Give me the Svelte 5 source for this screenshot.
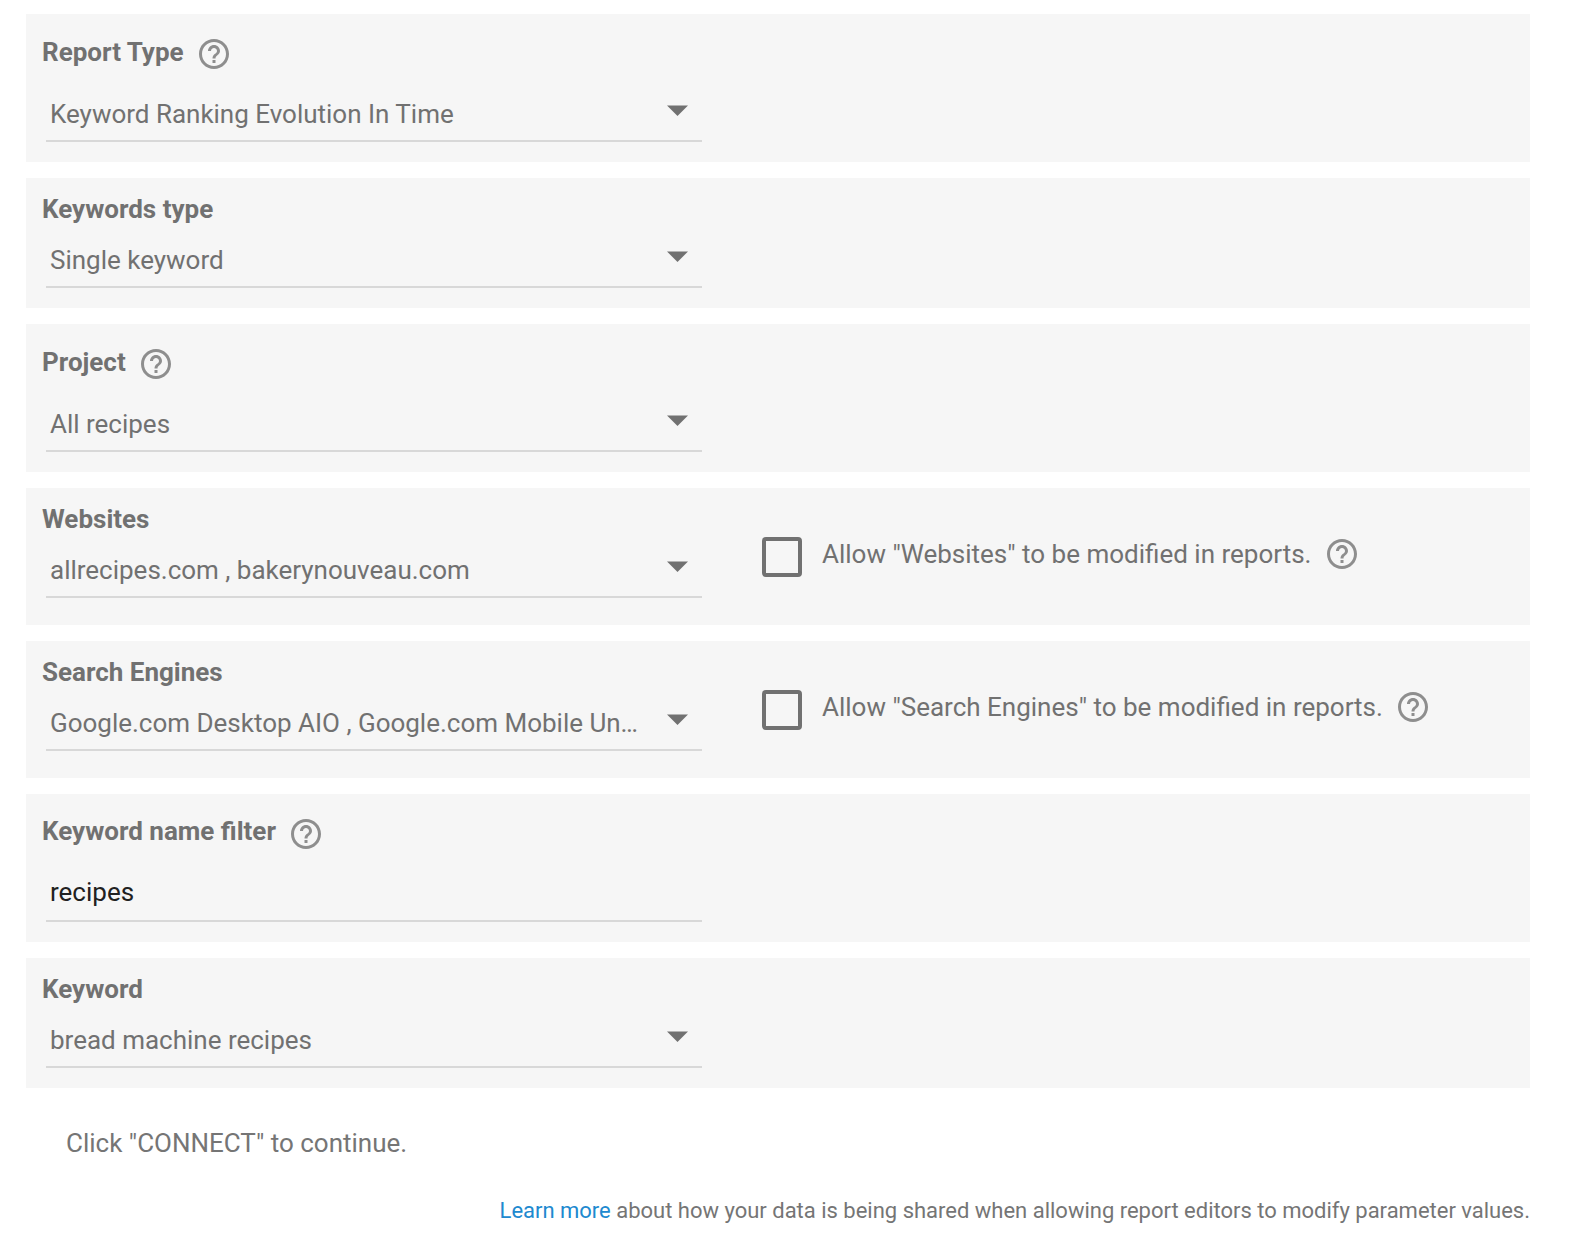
<script>
  // Connector parameters, one card per parameter.
  let params = $state([
    { name: 'Report Type', value: 'Keyword Ranking Evolution In Time', help: true },
    { name: 'Keywords type', value: 'Single keyword' },
    { name: 'Project', value: 'All recipes', help: true },
    { name: 'Websites', value: 'allrecipes.com , bakerynouveau.com', override: true, checked: false },
    { name: 'Search Engines', value: 'Google.com Desktop AIO , Google.com Mobile Un…', override: true, checked: false },
    { name: 'Keyword name filter', value: 'recipes', help: true, input: true },
    { name: 'Keyword', value: 'bread machine recipes' }
  ]);
</script>

{#snippet helpIcon()}
  <svg class="help" viewBox="0 0 24 24" aria-label="Help">
    <path d="M11 18h2v-2h-2v2zm1-16C6.48 2 2 6.48 2 12s4.48 10 10 10 10-4.48 10-10S17.52 2 12 2zm0 18c-4.41 0-8-3.59-8-8s3.59-8 8-8 8 3.59 8 8-3.59 8-8 8zm0-14c-2.21 0-4 1.79-4 4h2c0-1.1.9-2 2-2s2 .9 2 2c0 2-3 1.75-3 5h2c0-2.25 3-2.5 3-5 0-2.21-1.79-4-4-4z" />
  </svg>
{/snippet}

<main>
  {#each params as p}
    <section class="card" class:overridable={p.override}>
      <div class="param">
        <div class="title" class:tall={p.help}>
          <span class:raised={p.input}>{p.name}</span>
          {#if p.help}{@render helpIcon()}{/if}
        </div>
        {#if p.input}
          <input class="field" type="text" aria-label={p.name} bind:value={p.value} />
        {:else}
          <div class="field select" role="button" tabindex="0">
            <span class="value">{p.value}</span>
            <svg class="arrow" viewBox="0 0 21 11"><path d="M0 .5h21L10.5 11z" /></svg>
          </div>
        {/if}
      </div>
      {#if p.override}
        <div class="override">
          <label>
            <input type="checkbox" bind:checked={p.checked} />
            <span>Allow "{p.name}" to be modified in reports.</span>
          </label>
          {@render helpIcon()}
        </div>
      {/if}
    </section>
  {/each}

  <p class="hint">Click "CONNECT" to continue.</p>
  <p class="footnote"><a href="#learn">Learn more</a> about how your data is being shared when allowing report editors to modify parameter values.</p>
</main>

<style>
  :global(body) { margin: 0; background: #fff; }
  main { box-sizing: border-box; width: 1578px; height: 1244px; overflow: hidden; padding: 14px 48px 0 26px; font: 400 26px/30px Roboto, sans-serif; color: #717171; }
  .card { display: flex; align-items: flex-start; margin-bottom: 16px; padding: 16px 16px 20px; background: #f6f6f6; }
  .card.overridable { padding-bottom: 27px; }
  .param { width: 660px; }
  .title { display: flex; align-items: center; gap: 12px; height: 30px; font-weight: 700; white-space: nowrap; }
  .title.tall { height: 48px; }
  .title.tall span { padding-bottom: 4px; }
  .title.tall span.raised { padding-bottom: 6px; }
  .help { flex: none; width: 36px; height: 36px; fill: #8e8e8e; }
  .field { box-sizing: border-box; width: 656px; height: 64px; margin: 0 0 0 4px; padding: 21px 4px 11px; border: 0; border-bottom: 2px solid #d8d8d8; }
  input.field { display: block; padding: 19px 4px 13px; background: none; font: inherit; color: #212121; outline: none; }
  .select { display: flex; align-items: flex-start; justify-content: space-between; padding-right: 14.4px; }
  .value { width: 598px; letter-spacing: -0.008px; white-space: nowrap; }
  .arrow { width: 21px; height: 11px; margin-top: 6px; fill: #717171; }
  .override { display: flex; align-items: flex-start; gap: 12.5px; margin: 32px 0 0 60px; white-space: nowrap; }
  label { display: flex; align-items: flex-start; gap: 20px; }
  label span { margin-top: 3px; }
  input[type='checkbox'] { appearance: none; box-sizing: border-box; width: 40px; height: 40px; margin: 1px 0 0; border: 4px solid #717171; border-radius: 4px; }
  .hint { margin: 40px 0 0 40px; color: #757575; }
  .footnote { margin: 38px 0 0; font-size: 22px; letter-spacing: -0.007px; text-align: right; white-space: nowrap; color: #757575; }
  a { color: #2089cf; text-decoration: none; }
</style>
